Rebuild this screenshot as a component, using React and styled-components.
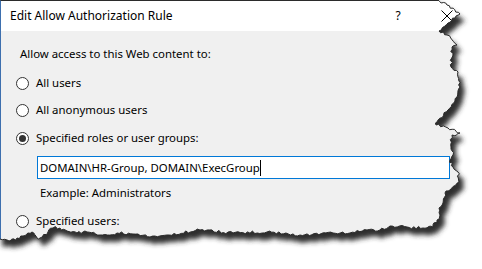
import React, { useMemo } from 'react';
import styled, { createGlobalStyle } from 'styled-components';

const Global = createGlobalStyle`
  html, body { margin: 0; padding: 0; background: #fff; }
  body { font-family: "Noto Sans", "Segoe UI", sans-serif; color: #000; }
`;

const Stage = styled.div`
  position: relative;
  width: 482px;
  height: 269px;
  overflow: hidden;
  background: #fff;
`;

const Dialog = styled.div`
  width: 481px;
  height: 250px;
  border-top: 1px solid #2b2b2b;
  border-left: 1px solid #3d6fae;
  display: flex;
  flex-direction: column;
  font-size: 11.4px;
`;

const TitleBar = styled.div`
  height: 30px;
  background: #fff;
  display: flex;
  align-items: center;
  padding-left: 9px;
  flex: none;
`;

const Title = styled.div`
  flex: 1;
  font-size: 12px;
  line-height: 16px;
  color: #000;
`;

const HelpGlyph = styled.div`
  width: 12px;
  margin-right: 37px;
  font-size: 12px;
  line-height: 16px;
  text-align: center;
`;

const CloseIcon = styled.svg`
  width: 12px;
  height: 12px;
  margin-right: 29px;
  display: block;
`;

const Body = styled.div`
  flex: 1;
  background: #f0f0f0;
  padding: 15px 0 0 15px;
  display: flex;
  flex-direction: column;
  align-items: flex-start;
`;

const Heading = styled.div`
  line-height: 16px;
  padding-left: 4px;
`;

const OptionRow = styled.label`
  display: flex;
  align-items: center;
  gap: 7px;
  height: 16px;
  line-height: 16px;
  margin-top: ${(p) => p.$gap}px;
`;

const Radio = styled.span`
  width: 13px;
  height: 13px;
  box-sizing: border-box;
  border: 1px solid #333;
  border-radius: 50%;
  background: #fff;
  display: flex;
  align-items: center;
  justify-content: center;
  flex: none;
  &::after {
    content: "";
    display: ${(p) => (p.$checked ? 'block' : 'none')};
    width: 7px;
    height: 7px;
    border-radius: 50%;
    background: #333;
  }
`;

const TextBox = styled.div`
  margin-top: 10px;
  margin-left: 21px;
  width: 413px;
  height: 23px;
  box-sizing: border-box;
  border: 1px solid #0078d7;
  background: #fff;
  padding-left: 2px;
  display: flex;
  align-items: center;
  line-height: 16px;
`;

const Caret = styled.span`
  display: inline-block;
  width: 1px;
  height: 16px;
  background: #000;
`;

const Hint = styled.div`
  margin-top: 6px;
  margin-left: 24px;
  line-height: 16px;
`;

const Overlay = styled.svg`
  position: absolute;
  left: 0;
  top: 0;
  width: 482px;
  height: 269px;
  pointer-events: none;
`;

function makeRand(seed) {
  let s = seed;
  return () => {
    s = (s * 9301 + 49297) % 233280;
    return s / 233280;
  };
}

function jag(points, rnd, step = 3, amp = 1.6) {
  const out = [points[0]];
  for (let i = 1; i < points.length; i++) {
    const [x0, y0] = points[i - 1];
    const [x1, y1] = points[i];
    const dx = x1 - x0;
    const dy = y1 - y0;
    const len = Math.hypot(dx, dy);
    const n = Math.max(1, Math.ceil(len / step));
    const nx = -dy / (len || 1);
    const ny = dx / (len || 1);
    for (let k = 1; k < n; k++) {
      const t = k / n;
      const o = (rnd() - 0.5) * 2 * amp;
      out.push([x0 + dx * t + nx * o, y0 + dy * t + ny * o]);
    }
    out.push([x1, y1]);
  }
  return out;
}

const rightEdge = [
  [438, 0], [447, 5], [460, 14], [455, 18], [448, 23], [439, 31], [447, 35],
  [457, 45], [452, 47], [451, 67], [458, 72], [460, 87], [457, 97], [448, 110],
  [437, 122], [436, 125], [448, 128], [460, 133], [452, 135], [451, 147],
  [453, 155], [450, 160], [453, 167], [458, 172], [459, 182], [450, 190],
  [445, 193], [443, 203], [439, 208], [440, 215], [437, 220], [433, 227],
];

const bottomEdge = [
  [433, 227], [423, 228], [407, 227], [390, 226], [380, 230], [367, 230],
  [350, 233], [333, 233], [300, 235], [267, 232], [233, 233], [200, 230],
  [167, 235], [150, 237], [133, 234], [117, 233], [100, 235], [87, 232],
  [77, 233], [67, 231], [60, 228], [53, 228], [48, 232], [40, 238],
  [37, 238], [32, 232], [28, 233], [23, 236], [17, 238], [10, 241],
  [7, 240], [0, 239], [-3, 239],
];

function TornEdge() {
  const poly = useMemo(() => {
    const rnd = makeRand(11);
    const pts = [
      [-3, -3],
      [437, -3],
      ...jag(rightEdge, rnd, 2.5, 1.4),
      ...jag(bottomEdge, rnd, 2.5, 1.4).slice(1),
    ];
    return 'M' + pts.map(([x, y]) => `${x.toFixed(1)} ${y.toFixed(1)}`).join(' L') + ' Z';
  }, []);
  const outside = `M-20 -20 H520 V300 H-20 Z ${poly}`;
  return (
    <Overlay viewBox="0 0 482 269">
      <defs>
        <clipPath id="outsideClip">
          <path d={outside} clipRule="evenodd" />
        </clipPath>
        <filter id="soft" x="-10%" y="-10%" width="120%" height="120%">
          <feGaussianBlur stdDeviation="2.4" />
        </filter>
      </defs>
      <path d={outside} fill="#fff" fillRule="evenodd" />
      <g clipPath="url(#outsideClip)">
        <path d={poly} transform="translate(5 7)" fill="#2e2e2e" filter="url(#soft)" />
      </g>
      <path d={poly} fill="none" stroke="#2a2a2a" strokeWidth="1" />
    </Overlay>
  );
}

export default function App() {
  return (
    <>
      <Global />
      <Stage>
        <Dialog>
          <TitleBar>
            <Title>Edit Allow Authorization Rule</Title>
            <HelpGlyph>?</HelpGlyph>
            <CloseIcon viewBox="0 0 12 12">
              <path d="M0.5 0.5 L11.5 11.5 M11.5 0.5 L0.5 11.5" stroke="#000" strokeWidth="1" />
            </CloseIcon>
          </TitleBar>
          <Body>
            <Heading>Allow access to this Web content to:</Heading>
            <OptionRow $gap={13}>
              <Radio />
              All users
            </OptionRow>
            <OptionRow $gap={11}>
              <Radio />
              All anonymous users
            </OptionRow>
            <OptionRow $gap={12}>
              <Radio $checked />
              Specified roles or user groups:
            </OptionRow>
            <TextBox>
              <span>DOMAIN\HR-Group, DOMAIN\ExecGroup</span>
              <Caret />
            </TextBox>
            <Hint>Example: Administrators</Hint>
            <OptionRow $gap={12}>
              <Radio />
              Specified users:
            </OptionRow>
          </Body>
        </Dialog>
        <TornEdge />
      </Stage>
    </>
  );
}
